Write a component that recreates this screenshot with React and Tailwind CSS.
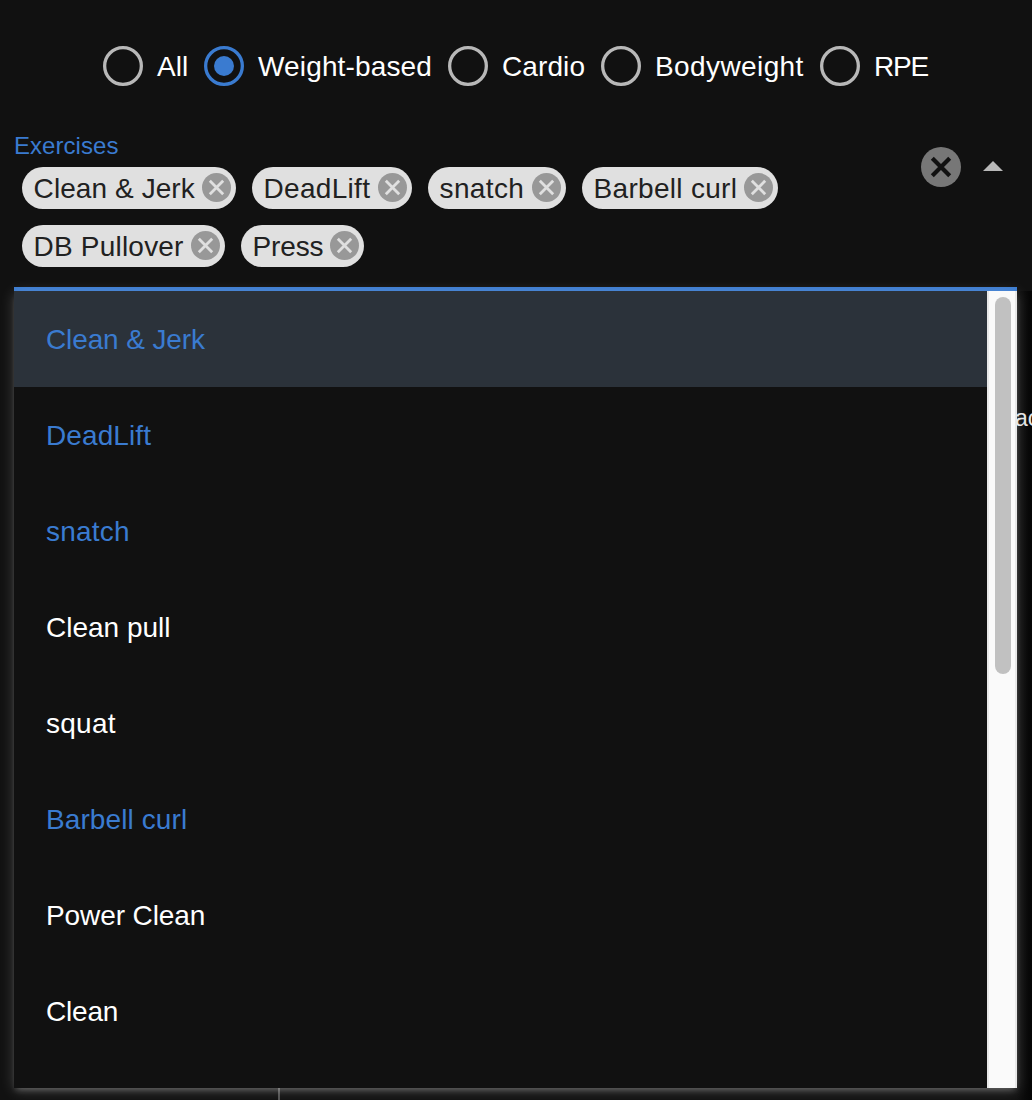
const radios = [
  { label: 'All', width: 'w-[101px]', tracking: 'tracking-normal' },
  { label: 'Weight-based', width: 'w-[244px]', tracking: 'tracking-[0.15px]', selected: true },
  { label: 'Cardio', width: 'w-[153px]', tracking: 'tracking-[0.1px]' },
  { label: 'Bodyweight', width: 'w-[219px]', tracking: 'tracking-[0.4px]' },
  { label: 'RPE', width: 'w-[110px]', tracking: 'tracking-[-1.2px]' },
];

const chips = [
  { label: 'Clean & Jerk', width: 'w-[214px]', tracking: 'tracking-[0.08px]' },
  { label: 'DeadLift', width: 'w-[160px]', tracking: 'tracking-[0.3px]' },
  { label: 'snatch', width: 'w-[138px]', tracking: 'tracking-[0.35px]' },
  { label: 'Barbell curl', width: 'w-[196px]', tracking: 'tracking-[0.3px]' },
  { label: 'DB Pullover', width: 'w-[203px]', tracking: 'tracking-[0.2px]' },
  { label: 'Press', width: 'w-[123px]', tracking: 'tracking-[-0.15px]' },
];

const options = [
  { label: 'Clean & Jerk', tracking: 'tracking-[-0.12px]', selected: true, focused: true },
  { label: 'DeadLift', tracking: 'tracking-[0.1px]', selected: true },
  { label: 'snatch', tracking: 'tracking-[0.2px]', selected: true },
  { label: 'Clean pull', tracking: 'tracking-normal' },
  { label: 'squat', tracking: 'tracking-[0.25px]' },
  { label: 'Barbell curl', tracking: 'tracking-[0.1px]', selected: true },
  { label: 'Power Clean', tracking: 'tracking-[-0.1px]' },
  { label: 'Clean', tracking: 'tracking-[-0.2px]' },
];

function Radio({ item }) {
  return (
    <label className={`flex h-10 shrink-0 items-center ${item.width}`}>
      <svg className="size-10 shrink-0" viewBox="0 0 40 40" fill="none">
        <circle cx="20" cy="20" r="18.35" stroke={item.selected ? '#3a7bd0' : '#b8b8b8'} strokeWidth="3.3" />
        {item.selected && <circle cx="20" cy="20" r="10" fill="#3a7bd0" />}
      </svg>
      <span className={`ml-[14px] pt-[2px] whitespace-nowrap ${item.tracking}`}>{item.label}</span>
    </label>
  );
}

function Chip({ item }) {
  return (
    <div className={`flex h-[42px] items-center justify-between rounded-full bg-[#e0e0e0] pr-[5.4px] pl-[11.6px] text-[#212121] ${item.width}`}>
      <span className={`pt-[2px] whitespace-nowrap ${item.tracking}`}>{item.label}</span>
      <svg className="-mt-px size-[29px] shrink-0" viewBox="0 0 29 29">
        <circle cx="14.5" cy="14.5" r="14.5" fill="#989898" />
        <path d="M7.8 7.8l13.4 13.4M21.2 7.8L7.8 21.2" stroke="#e0e0e0" strokeWidth="2.8" />
      </svg>
    </div>
  );
}

export default function App() {
  return (
    <div className="relative h-[1100px] w-[1032px] overflow-hidden bg-[#111] pt-[46px] font-['Liberation_Sans',Arial,sans-serif] text-[28px] leading-[42px] text-white">
      <div className="absolute top-[291px] right-0 h-[809px] w-[15px] bg-gradient-to-r from-[#111] to-[#050505]" />
      <span className="absolute top-[397px] left-[1015px] text-[23px] text-[#e4e4e4]">ac</span>
      <div className="absolute top-[1088px] left-[278px] h-3 w-[2px] bg-[#515151]" />

      <div className="flex pl-[103px]">
        {radios.map((r) => (
          <Radio key={r.label} item={r} />
        ))}
      </div>

      <div className="mx-[14px] mt-[45px] flex h-[156px] items-start justify-between">
        <div>
          <div className="h-9 text-[24px] leading-[30px] tracking-[0.05px] text-[#3a7bd0]">Exercises</div>
          <div className="flex w-[800px] flex-wrap gap-4 pl-2">
            {chips.map((c) => (
              <Chip key={c.label} item={c} />
            ))}
          </div>
        </div>
        <div className="mt-4 flex items-center gap-[22px] pr-[14.7px]">
          <svg className="size-10" viewBox="0 0 40 40">
            <circle cx="20" cy="20" r="20" fill="#777" />
            <path d="M11.3 11.3l17.4 17.4M28.7 11.3L11.3 28.7" stroke="#111" strokeWidth="4.2" />
          </svg>
          <svg className="-mt-[2px] h-[10px] w-5" viewBox="0 0 20 10">
            <path d="M0 10L10 0l10 10z" fill="#b8b8b8" />
          </svg>
        </div>
      </div>

      <div className="relative mx-[14px] w-[1003px]">
        <div className="h-1 bg-[#3a7bd0]" />
        <div className="flex h-[797px] bg-[#111] shadow-[0_4px_6px_-2px_rgba(255,255,255,0.25),0_2px_14px_rgba(255,255,255,0.2)]">
          <div className="flex-1 overflow-hidden">
            {options.map((o) => (
              <div
                key={o.label}
                className={`flex h-24 items-center pt-[2px] pl-8 ${o.tracking} ${o.selected ? 'text-[#3a7bd0]' : ''} ${o.focused ? 'bg-[#2b323a]' : ''}`}
              >
                {o.label}
              </div>
            ))}
          </div>
          <div className="flex w-[30px] items-start justify-center border-x-2 border-[#e8e8e8] bg-[#fafafa] pt-[6px] pl-px">
            <div className="h-[377px] w-4 rounded-full bg-[#c1c1c1]" />
          </div>
        </div>
      </div>
    </div>
  );
}
